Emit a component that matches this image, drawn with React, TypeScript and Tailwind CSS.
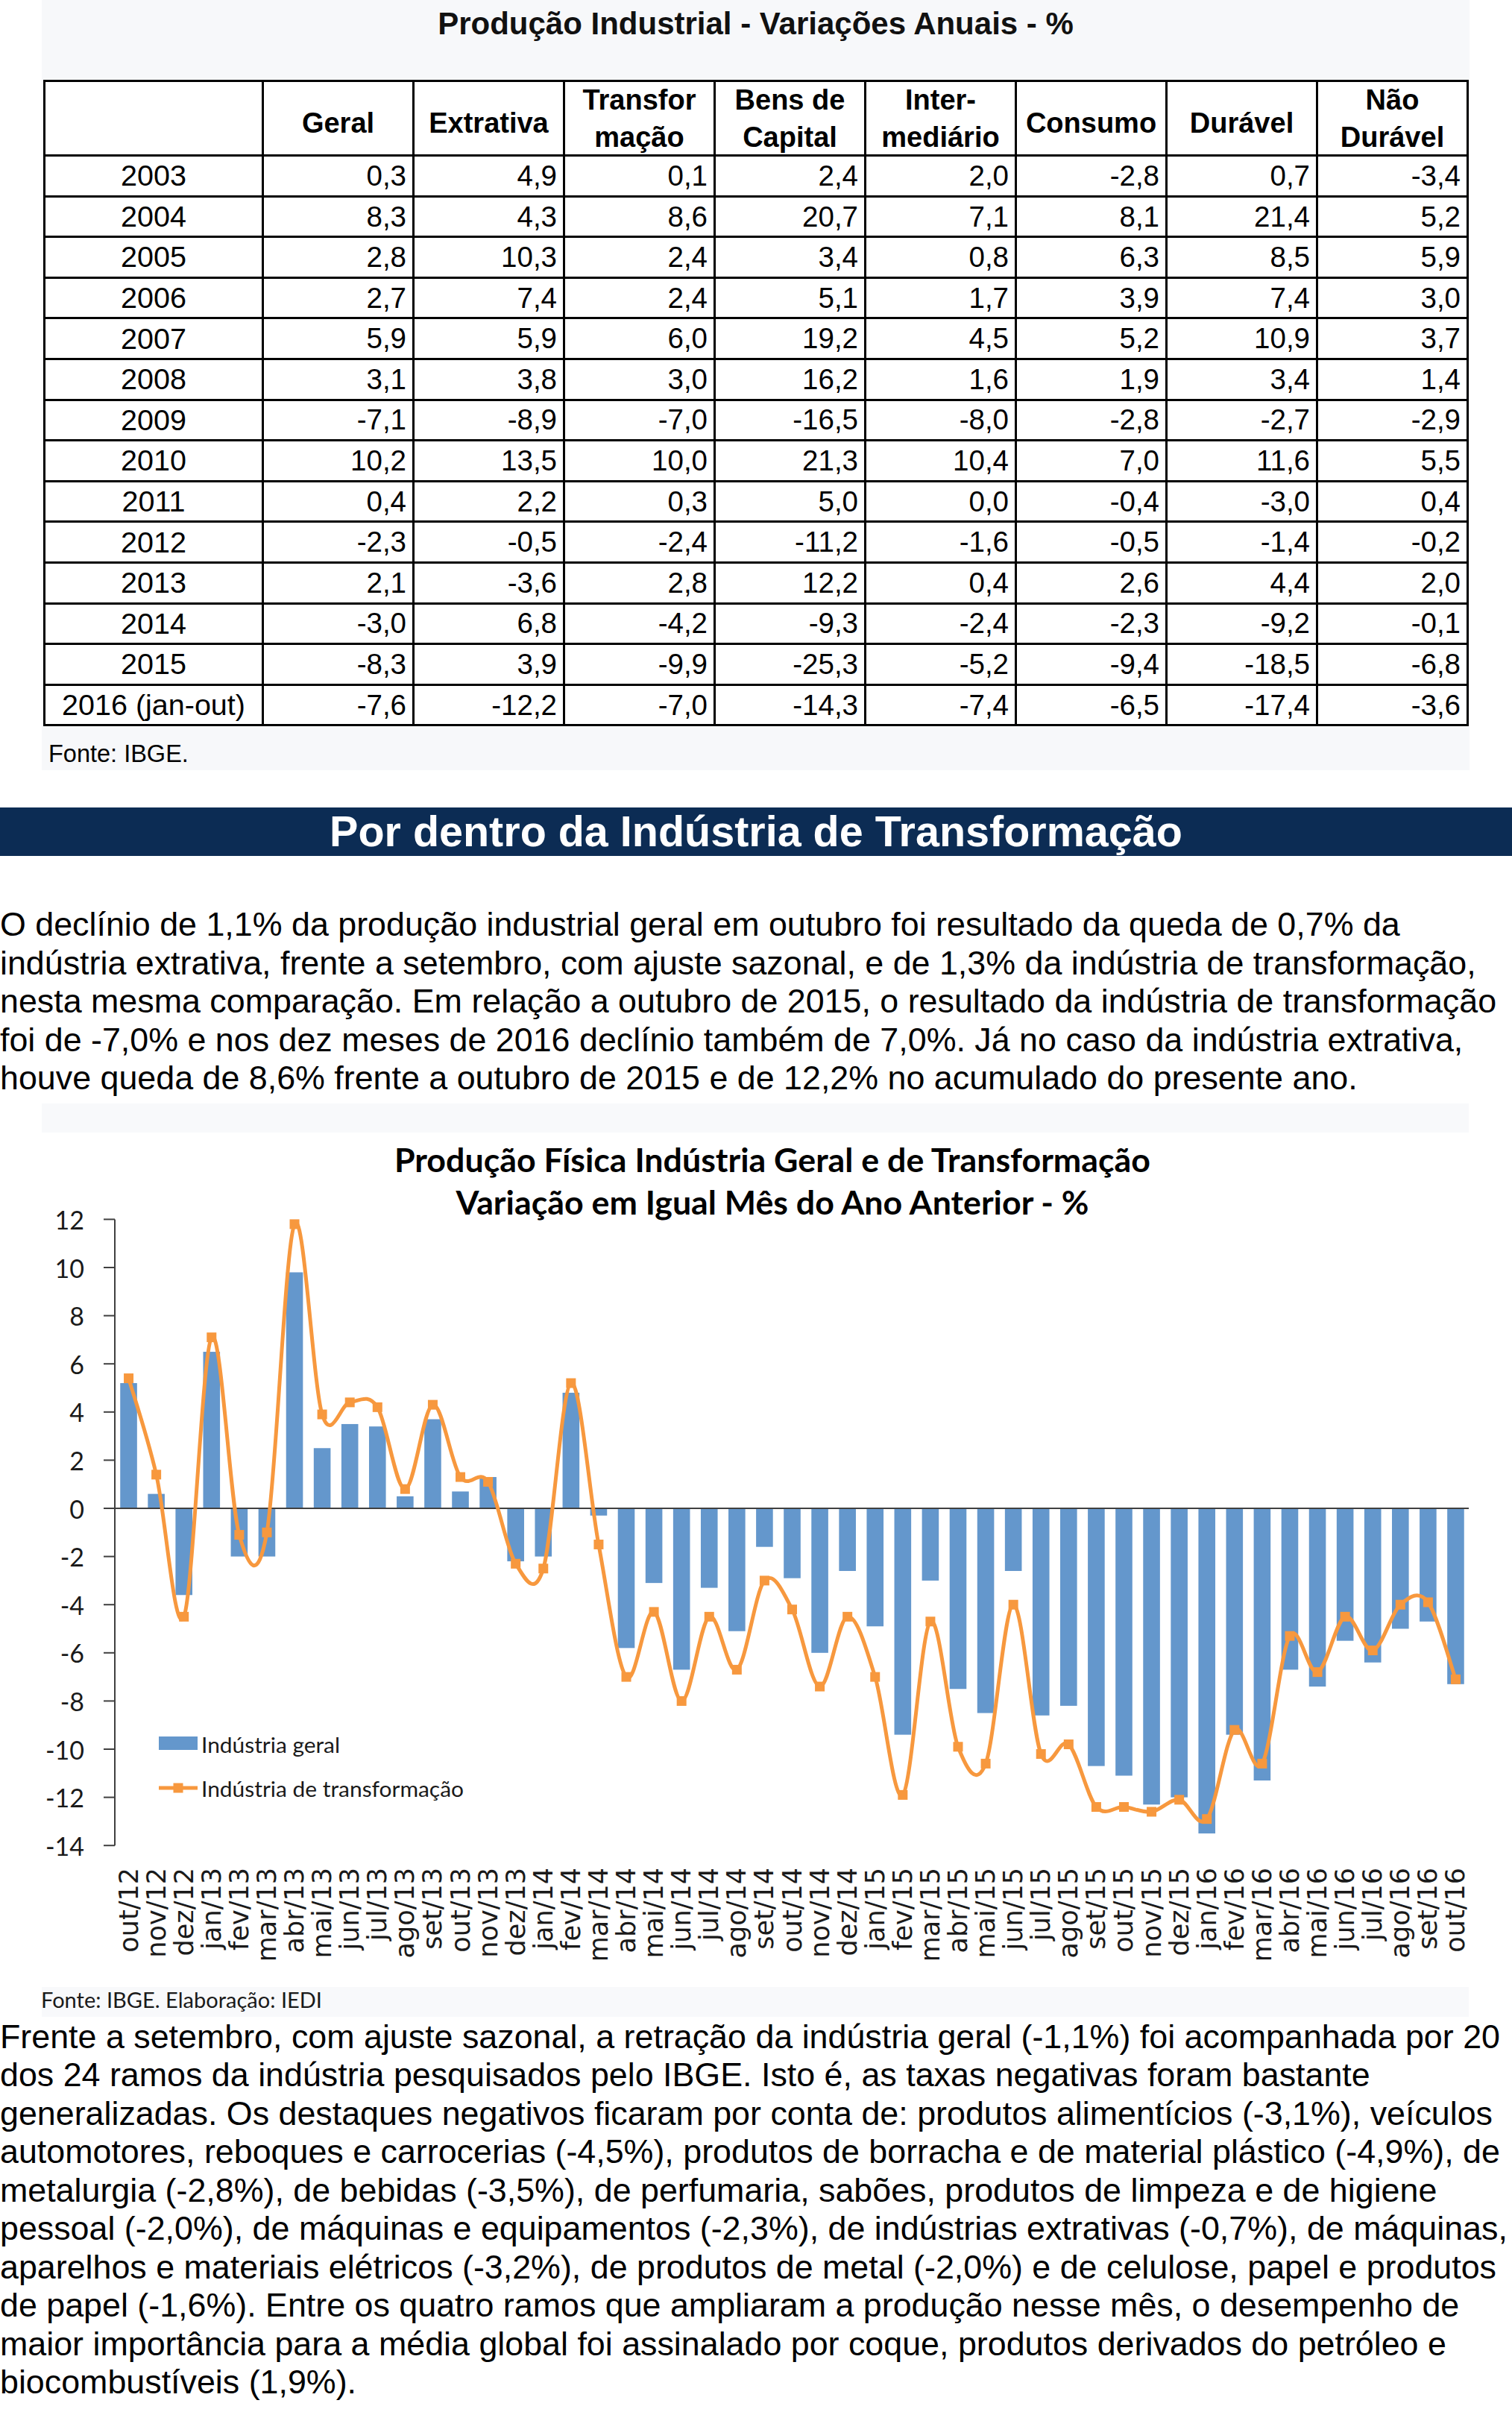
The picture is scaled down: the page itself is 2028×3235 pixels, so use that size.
const headers: string[][] = [
  ["Geral"],
  ["Extrativa"],
  ["Transfor", "mação"],
  ["Bens de", "Capital"],
  ["Inter-", "mediário"],
  ["Consumo"],
  ["Durável"],
  ["Não", "Durável"],
];

const rows: [string, string[]][] = [
  ["2003", ["0,3", "4,9", "0,1", "2,4", "2,0", "-2,8", "0,7", "-3,4"]],
  ["2004", ["8,3", "4,3", "8,6", "20,7", "7,1", "8,1", "21,4", "5,2"]],
  ["2005", ["2,8", "10,3", "2,4", "3,4", "0,8", "6,3", "8,5", "5,9"]],
  ["2006", ["2,7", "7,4", "2,4", "5,1", "1,7", "3,9", "7,4", "3,0"]],
  ["2007", ["5,9", "5,9", "6,0", "19,2", "4,5", "5,2", "10,9", "3,7"]],
  ["2008", ["3,1", "3,8", "3,0", "16,2", "1,6", "1,9", "3,4", "1,4"]],
  ["2009", ["-7,1", "-8,9", "-7,0", "-16,5", "-8,0", "-2,8", "-2,7", "-2,9"]],
  ["2010", ["10,2", "13,5", "10,0", "21,3", "10,4", "7,0", "11,6", "5,5"]],
  ["2011", ["0,4", "2,2", "0,3", "5,0", "0,0", "-0,4", "-3,0", "0,4"]],
  ["2012", ["-2,3", "-0,5", "-2,4", "-11,2", "-1,6", "-0,5", "-1,4", "-0,2"]],
  ["2013", ["2,1", "-3,6", "2,8", "12,2", "0,4", "2,6", "4,4", "2,0"]],
  ["2014", ["-3,0", "6,8", "-4,2", "-9,3", "-2,4", "-2,3", "-9,2", "-0,1"]],
  ["2015", ["-8,3", "3,9", "-9,9", "-25,3", "-5,2", "-9,4", "-18,5", "-6,8"]],
  ["2016 (jan-out)", ["-7,6", "-12,2", "-7,0", "-14,3", "-7,4", "-6,5", "-17,4", "-3,6"]],
];

// Indústria geral (barras) e de transformação (linha), out/12 a out/16
const geral = [
  5.2, 0.6, -3.6, 6.5, -2.0, -2.0, 9.8, 2.5, 3.5, 3.4, 0.5, 3.7, 0.7, 1.3, -2.2, -2.0, 4.8, -0.3, -5.8, -3.1, -6.7,
  -3.3, -5.1, -1.6, -2.9, -6.0, -2.6, -4.9, -9.4, -3.0, -7.5, -8.5, -2.6, -8.6, -8.2, -10.7, -11.1, -12.3, -12.0,
  -13.5, -9.4, -11.3, -6.7, -7.4, -5.5, -6.4, -5.0, -4.7, -7.3,
];
const transf = [
  5.4, 1.4, -4.5, 7.1, -1.1, -1.0, 11.8, 3.9, 4.4, 4.2, 0.8, 4.3, 1.3, 1.1, -2.3, -2.5, 5.2, -1.5, -7.0, -4.3, -8.0,
  -4.5, -6.7, -3.0, -4.2, -7.4, -4.5, -7.0, -11.9, -4.7, -9.9, -10.6, -4.0, -10.2, -9.8, -12.4, -12.4, -12.6, -12.1,
  -12.9, -9.2, -10.6, -5.3, -6.8, -4.5, -5.9, -4.0, -3.9, -7.1,
];

const meses = ["jan", "fev", "mar", "abr", "mai", "jun", "jul", "ago", "set", "out", "nov", "dez"];
const labels = geral.map((_, i) => `${meses[(9 + i) % 12]}/${12 + Math.floor((9 + i) / 12)}`);

const X0 = 154;
const X1 = 1971;
const STEP = (X1 - X0) / geral.length;
const Y0 = 2023;
const K = 32.3;
const BLUE = "#6497cc";
const ORANGE = "#f7983e";

const cx = (i: number) => X0 + (i + 0.5) * STEP;
const cy = (v: number) => Y0 - v * K;

function smoothPath(vals: number[]) {
  const p = vals.map((v, i) => [cx(i), cy(v)]);
  let d = `M${p[0][0]},${p[0][1]}`;
  for (let i = 0; i < p.length - 1; i++) {
    const p0 = p[i - 1] ?? p[i];
    const p1 = p[i];
    const p2 = p[i + 1];
    const p3 = p[i + 2] ?? p2;
    const c1x = p1[0] + (p2[0] - p0[0]) / 6;
    const c1y = p1[1] + (p2[1] - p0[1]) / 6;
    const c2x = p2[0] - (p3[0] - p1[0]) / 6;
    const c2y = p2[1] - (p3[1] - p1[1]) / 6;
    d += ` C${c1x},${c1y} ${c2x},${c2y} ${p2[0]},${p2[1]}`;
  }
  return d;
}

function Chart() {
  const ticks = [12, 10, 8, 6, 4, 2, 0, -2, -4, -6, -8, -10, -12, -14];
  return (
    <svg width={1914} height={1225} viewBox="56 1480 1914 1225" className="block">
      <rect x={56} y={1480} width={1914} height={1225} fill="#f8f9fb" />
      <rect x={56} y={1519} width={1914} height={1146} fill="#ffffff" />

      <g fontFamily="Lato, 'Open Sans', sans-serif" fontWeight={700} fill="#000">
        <text x={1036} y={1555} textAnchor="middle" dominantBaseline="central" fontSize={44} textLength={1014} lengthAdjust="spacingAndGlyphs">
          Produção Física Indústria Geral e de Transformação
        </text>
        <text x={1036} y={1612} textAnchor="middle" dominantBaseline="central" fontSize={44} textLength={849} lengthAdjust="spacingAndGlyphs">
          Variação em Igual Mês do Ano Anterior - %
        </text>
      </g>

      {geral.map((v, i) => (
        <rect key={i} x={cx(i) - 11.3} y={Math.min(Y0, cy(v))} width={22.6} height={Math.abs(v) * K} fill={BLUE} />
      ))}

      <line x1={X0} y1={Y0} x2={X1} y2={Y0} stroke="#404040" strokeWidth={2} />
      <line x1={X0} y1={cy(12)} x2={X0} y2={cy(-14)} stroke="#404040" strokeWidth={2} />
      {ticks.map((t) => (
        <g key={t}>
          <line x1={139} y1={cy(t)} x2={X0} y2={cy(t)} stroke="#404040" strokeWidth={2} />
          <text x={113} y={cy(t)} textAnchor="end" dominantBaseline="central" fontSize={34} fontFamily="Lato, sans-serif" fill="#1a1a1a">
            {t}
          </text>
        </g>
      ))}

      <path d={smoothPath(transf)} fill="none" stroke={ORANGE} strokeWidth={5} strokeLinejoin="round" />
      {transf.map((v, i) => (
        <rect key={i} x={cx(i) - 6.5} y={cy(v) - 6.5} width={13} height={13} fill={ORANGE} />
      ))}

      {labels.map((l, i) => (
        <text
          key={l}
          transform={`translate(${cx(i)},2505) rotate(-90)`}
          textAnchor="end"
          dominantBaseline="central"
          fontSize={35}
          fontFamily="'DejaVu Sans', Verdana, sans-serif"
          fill="#1a1a1a"
        >
          {l}
        </text>
      ))}

      <g fontFamily="Lato, sans-serif" fontSize={29} fill="#1a1a1a">
        <rect x={213} y={2329} width={52} height={18} fill={BLUE} />
        <text x={270} y={2339} dominantBaseline="central" textLength={186} lengthAdjust="spacingAndGlyphs">
          Indústria geral
        </text>
        <line x1={213} y1={2398} x2={265} y2={2398} stroke={ORANGE} strokeWidth={5} />
        <rect x={232.5} y={2391.5} width={13} height={13} fill={ORANGE} />
        <text x={270} y={2398} dominantBaseline="central" textLength={352} lengthAdjust="spacingAndGlyphs">
          Indústria de transformação
        </text>
        <text x={55} y={2682} dominantBaseline="central" textLength={377} lengthAdjust="spacingAndGlyphs" fontSize={28}>
          Fonte: IBGE. Elaboração: IEDI
        </text>
      </g>
    </svg>
  );
}

const para1 = [
  "O declínio de 1,1% da produção industrial geral em outubro foi resultado da queda de 0,7% da",
  "indústria extrativa, frente a setembro, com ajuste sazonal, e de 1,3% da indústria de transformação,",
  "nesta mesma comparação. Em relação a outubro de 2015, o resultado da indústria de transformação",
  "foi de -7,0% e nos dez meses de 2016 declínio também de 7,0%. Já no caso da indústria extrativa,",
  "houve queda de 8,6% frente a outubro de 2015 e de 12,2% no acumulado do presente ano.",
];

const para2 = [
  "Frente a setembro, com ajuste sazonal, a retração da indústria geral (-1,1%) foi acompanhada por 20",
  "dos 24 ramos da indústria pesquisados pelo IBGE. Isto é, as taxas negativas foram bastante",
  "generalizadas. Os destaques negativos ficaram por conta de: produtos alimentícios (-3,1%), veículos",
  "automotores, reboques e carrocerias (-4,5%), produtos de borracha e de material plástico (-4,9%), de",
  "metalurgia (-2,8%), de bebidas (-3,5%), de perfumaria, sabões, produtos de limpeza e de higiene",
  "pessoal (-2,0%), de máquinas e equipamentos (-2,3%), de indústrias extrativas (-0,7%), de máquinas,",
  "aparelhos e materiais elétricos (-3,2%), de produtos de metal (-2,0%) e de celulose, papel e produtos",
  "de papel (-1,6%). Entre os quatro ramos que ampliaram a produção nesse mês, o desempenho de",
  "maior importância para a média global foi assinalado por coque, produtos derivados do petróleo e",
  "biocombustíveis (1,9%).",
];

export default function App() {
  return (
    <div className="w-[2028px] min-h-[3235px] bg-white text-black font-[family-name:'Liberation_Sans',Arial,sans-serif]">
      <div className="ml-[56px] w-[1915px] h-[1033px] bg-[#f7f8fa]">
        <div className="h-[62px] flex items-center justify-center text-[42px] font-bold text-[#111]">
          Produção Industrial - Variações Anuais - %
        </div>
        <div className="mt-[45px] ml-[2px] w-[1912px] grid grid-cols-[293px_repeat(8,202px)] border-t-[3px] border-l-[3px] border-black bg-white text-[38.5px]">
          <div className="h-[100px] border-r-[3px] border-b-[3px] border-black" />
          {headers.map((h) => (
            <div
              key={h.join(" ")}
              className={`h-[100px] border-r-[3px] border-b-[3px] border-black flex flex-col items-center justify-center font-bold text-[38px] leading-[50px] text-center ${h.length === 1 ? "pt-[12px]" : ""}`}
            >
              {h.map((t) => (
                <span key={t} className="whitespace-nowrap">{t}</span>
              ))}
            </div>
          ))}
          {rows.map(([year, vals]) => (
            <div key={year} className="contents">
              <div className="h-[54.6px] border-r-[3px] border-b-[3px] border-black flex items-center justify-center whitespace-nowrap text-[39.5px]">
                {year}
              </div>
              {vals.map((v, j) => (
                <div key={j} className="h-[54.6px] border-r-[3px] border-b-[3px] border-black flex items-center justify-end pr-[8px]">
                  {v}
                </div>
              ))}
            </div>
          ))}
        </div>
        <p className="mt-[19px] ml-[9px] text-[32.5px] leading-[37px]">Fonte: IBGE.</p>
      </div>

      <div className="mt-[50px] h-[65px] bg-[#0c2c54] flex items-center justify-center text-white font-bold text-[57.5px]">
        Por dentro da Indústria de Transformação
      </div>

      <div className="mt-[66px] text-[44.8px] leading-[51.5px]">
        {para1.map((l) => (
          <p key={l} className="whitespace-nowrap">{l}</p>
        ))}
      </div>

      <div className="mt-[8px] ml-[56px] w-[1914px]">
        <Chart />
      </div>

      <div className="mt-[1px] text-[44.8px] leading-[51.5px]">
        {para2.map((l) => (
          <p key={l} className="whitespace-nowrap">{l}</p>
        ))}
      </div>
    </div>
  );
}
